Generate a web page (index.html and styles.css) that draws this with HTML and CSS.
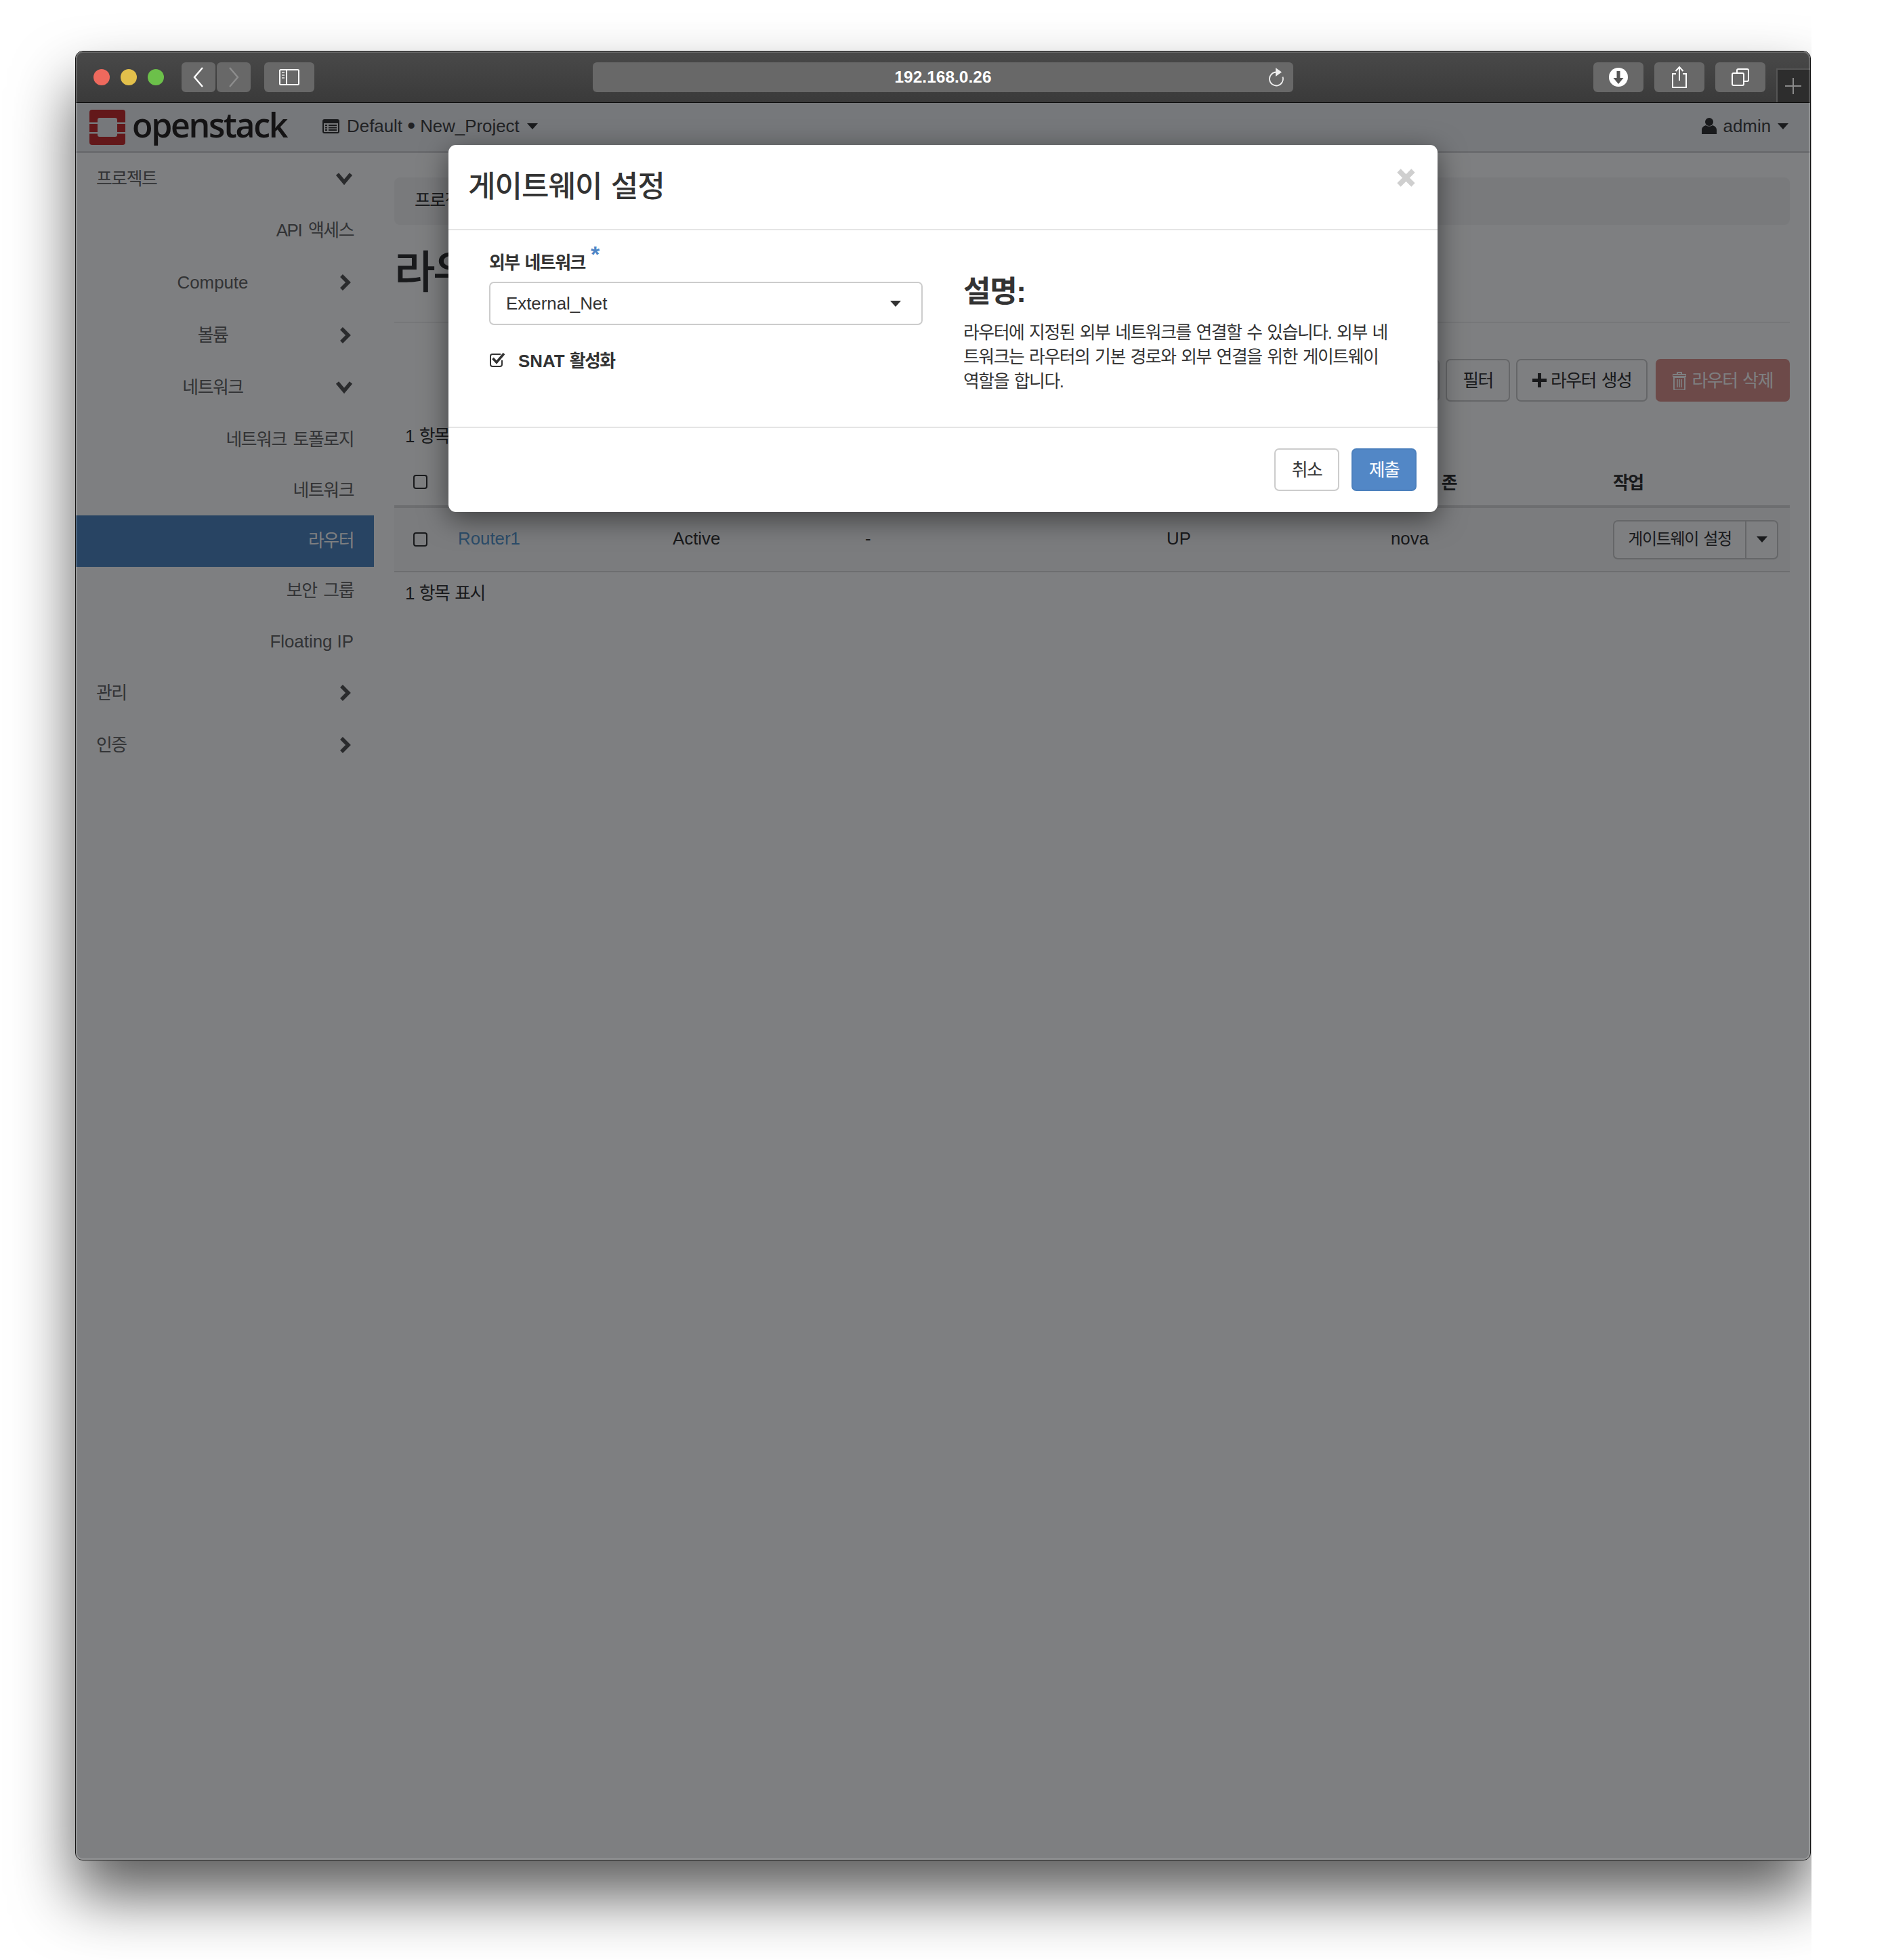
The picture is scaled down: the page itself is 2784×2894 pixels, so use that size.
FILE: index.html
```html
<!DOCTYPE html>
<html lang="ko">
<head>
  <meta charset="UTF-8">
  <title>게이트웨이 설정</title>
  <link rel="stylesheet" href="styles.css">
</head>
<body>

<div class="shot">
<div class="window">
  <!-- browser chrome -->
  <div class="titlebar">
    <div class="lights">
      <span class="light red"></span>
      <span class="light yellow"></span>
      <span class="light green"></span>
    </div>
    <div class="tool back"><svg width="16" height="32" viewBox="0 0 16 32"><polyline points="14,2 2,16 14,30" fill="none" stroke="#fff" stroke-width="2.4"/></svg></div>
    <div class="tool forward"><svg width="16" height="32" viewBox="0 0 16 32"><polyline points="2,2 14,16 2,30" fill="none" stroke="#8d8d8d" stroke-width="2.4"/></svg></div>
    <div class="tool side-toggle">
      <svg width="30" height="24" viewBox="0 0 30 24"><rect x="1" y="1" width="28" height="22" rx="1.5" fill="none" stroke="#fff" stroke-width="2"/><line x1="11" y1="1" x2="11" y2="23" stroke="#fff" stroke-width="2"/><path d="M4 5h4M4 9h4M4 13h4" stroke="#c8c8c8" stroke-width="2"/></svg>
    </div>
    <div class="urlbar">
      <span class="url">192.168.0.26</span>
      <svg class="reload" width="24" height="28" viewBox="0 0 24 28"><path d="M12 6.500a10 10 0 1 0 9.500 7" fill="none" stroke="#eee" stroke-width="1.8"/><path d="M11 0l9 6.500-9 6.500z" fill="#eee"/></svg>
    </div>
    <div class="tool download">
      <svg width="28" height="28" viewBox="0 0 28 28"><circle cx="14" cy="14" r="14" fill="#fff"/><path d="M11.500 5h5v10h5L14 24 6.500 15h5z" fill="#555"/></svg>
    </div>
    <div class="tool share">
      <svg width="24" height="34" viewBox="0 0 24 34"><path d="M7 12H2v20h20V12h-5" fill="none" stroke="#fff" stroke-width="2"/><path d="M12 22V2M6.500 8L12 2l5.500 6" fill="none" stroke="#fff" stroke-width="2"/></svg>
    </div>
    <div class="tool tabs">
      <svg width="26" height="26" viewBox="0 0 26 26"><rect x="1" y="7" width="17" height="18" rx="2" fill="none" stroke="#fff" stroke-width="2"/><path d="M8 7V3a2 2 0 0 1 2-2h13a2 2 0 0 1 2 2v14a2 2 0 0 1-2 2h-5" fill="none" stroke="#fff" stroke-width="2"/></svg>
    </div>
    <div class="new-tab">
      <svg width="24" height="24" viewBox="0 0 24 24"><path d="M12 0v24M0 12h24" stroke="#8a8a8a" stroke-width="2"/></svg>
    </div>
  </div>

  <div class="page">
    <div class="topnav">
      <div class="brand">
        <svg class="brand-mark" width="53" height="52" viewBox="0 0 53 52"><path fill="#c9302f" d="M4 0h45a4 4 0 0 1 4 4v14.500H41V15a3 3 0 0 0-3-3H15a3 3 0 0 0-3 3v3.500H0V4a4 4 0 0 1 4-4zM0 21h12v12H0zM41 21h12v12H41zM0 35.500h12V37a3 3 0 0 0 3 3h23a3 3 0 0 0 3-3v-1.500h12V48a4 4 0 0 1-4 4H4a4 4 0 0 1-4-4z"/></svg>
        <span class="brand-name">openstack</span>
      </div>
      <div class="project">
        <svg width="25" height="21" viewBox="0 0 25 21"><rect width="25" height="21" rx="3" fill="#333"/><rect x="2" y="6" width="21" height="13" fill="#eee"/><path d="M4 9h3M9 9h12M4 12.500h3M9 12.500h12M4 16h3M9 16h12" stroke="#333" stroke-width="2"/></svg>
        <span>Default <span class="dot">•</span> New_Project</span>
        <i class="caret"></i>
      </div>
      <div class="user">
        <svg width="22" height="24" viewBox="0 0 22 24"><circle cx="11" cy="6" r="6" fill="#333"/><path d="M0 24v-6c0-4 3-6 6-7 3 2 7 2 10 0 3 1 6 3 6 7v6z" fill="#333"/></svg>
        <span>admin</span>
        <i class="caret"></i>
      </div>
    </div>

    <div class="layout">
      <div class="sidebar">
        <div class="cat first left"><span class="ko">프로젝트</span><svg class="chev" viewBox="0 0 36 24"><polyline points="8,5 18,17 28,5" /></svg></div>
        <div class="leaf ko">API 액세스</div>
        <div class="cat"><span>Compute</span><svg class="chev" viewBox="0 0 36 24"><polyline points="14,2 24,12 14,22" /></svg></div>
        <div class="cat"><span class="ko">볼륨</span><svg class="chev" viewBox="0 0 36 24"><polyline points="14,2 24,12 14,22" /></svg></div>
        <div class="cat"><span class="ko">네트워크</span><svg class="chev" viewBox="0 0 36 24"><polyline points="8,5 18,17 28,5" /></svg></div>
        <div class="leaf ko">네트워크 토폴로지</div>
        <div class="leaf ko">네트워크</div>
        <div class="leaf active ko">라우터</div>
        <div class="leaf ko">보안 그룹</div>
        <div class="leaf">Floating IP</div>
        <div class="cat left"><span class="ko">관리</span><svg class="chev" viewBox="0 0 36 24"><polyline points="14,2 24,12 14,22" /></svg></div>
        <div class="cat left"><span class="ko">인증</span><svg class="chev" viewBox="0 0 36 24"><polyline points="14,2 24,12 14,22" /></svg></div>
      </div>

      <div class="content">
        <div class="breadcrumb ko">프로젝트 / 네트워크 / 라우터</div>
        <div class="page-header"><h1 class="ko">라우터</h1></div>

        <div class="actions">
          <div class="filter-input"></div>
          <div class="btn ko">필터</div>
          <div class="btn btn-create ko">
            <svg width="21" height="21" viewBox="0 0 21 21"><path d="M8 0h5v8h8v5h-8v8H8v-8H0V8h8z" fill="#333"/></svg>
            라우터 생성
          </div>
          <div class="btn btn-danger ko">
            <svg width="20" height="28" viewBox="0 0 20 28"><path d="M7 5V2h6v3M0 5h20v3H0zM2 9h16v17a2 2 0 0 1-2 2H4a2 2 0 0 1-2-2z" fill="none" stroke="#fff" stroke-width="2"/><path d="M7 12v12M10 12v12M13 12v12" stroke="#fff" stroke-width="1.600"/></svg>
            라우터 삭제
          </div>
        </div>

        <div class="count ko">1 항목 표시</div>

        <div class="grid head">
          <div><span class="check"></span></div>
          <div class="ko">이름</div>
          <div class="ko">상태</div>
          <div class="ko">외부 네트워크</div>
          <div class="ko">관리 상태</div>
          <div class="ko">가용성 존</div>
          <div class="ko">작업</div>
        </div>
        <div class="grid row">
          <div><span class="check"></span></div>
          <div class="link">Router1</div>
          <div>Active</div>
          <div>-</div>
          <div>UP</div>
          <div>nova</div>
          <div>
            <div class="split">
              <span class="split-main ko">게이트웨이 설정</span>
              <span class="split-caret"><i class="caret"></i></span>
            </div>
          </div>
        </div>
        <div class="count bottom ko">1 항목 표시</div>
      </div>
    </div>

    <div class="backdrop"></div>

    <div class="modal">
      <div class="modal-header">
        <h3 class="modal-title ko">게이트웨이 설정</h3>
        <svg class="close" width="27" height="27" viewBox="0 0 27 27"><path d="M3 3l21 21M24 3L3 24" stroke="#cfcfcf" stroke-width="7.500"/></svg>
      </div>
      <div class="modal-body">
        <div class="form-col">
          <div class="field-label"><span class="ko">외부 네트워크</span><sup class="req">*</sup></div>
          <div class="select">External_Net<i class="caret"></i></div>
          <div class="snat">
            <svg width="23" height="24" viewBox="0 0 23 24"><path d="M18 13v6a3 3 0 0 1-3 3H4a3 3 0 0 1-3-3V7a3 3 0 0 1 3-3h12" fill="none" stroke="#333" stroke-width="2"/><path d="M4.500 10l5.500 6L21 3" fill="none" stroke="#333" stroke-width="3.600"/></svg>
            <b>SNAT <span class="ko">활성화</span></b>
          </div>
        </div>
        <div class="help-col">
          <h4 class="ko">설명:</h4>
          <p class="ko">라우터에 지정된 외부 네트워크를 연결할 수 있습니다. 외부 네<br>트워크는 라우터의 기본 경로와 외부 연결을 위한 게이트웨이<br>역할을 합니다.</p>
        </div>
      </div>
      <div class="modal-footer">
        <div class="btn ko">취소</div>
        <div class="btn btn-primary ko">제출</div>
      </div>
    </div>
  </div>
</div>
</div>

</body>
</html>
```

FILE: styles.css
```css
body {
  margin: 0;
  width: 2784px;
  height: 2894px;
  background: #fff;
  font-family: "Liberation Sans", "Noto Sans CJK KR", sans-serif;
  font-size: 25.85px;
  line-height: 36px;
  color: #333;
  overflow: hidden;
}

.ko {
  letter-spacing: -0.055em;
  word-spacing: 2px;
}

/* the capture stops at the window's right edge, so its shadow does too */
.shot {
  width: 2674px;
  height: 2894px;
  overflow: hidden;
}

.window {
  position: relative;
  box-sizing: border-box;
  width: 2562px;
  height: 2672px;
  margin: 0 0 0 111px;
  top: 75px;
  border: 1px solid #111;
  border-radius: 11px;
  overflow: hidden;
  background: #fff;
  box-shadow: 0 52px 90px rgba(0, 0, 0, 0.64);
}

/* thin light edge just inside the window border */
.window::after {
  content: "";
  position: absolute;
  inset: 0;
  border-radius: 10px;
  box-shadow: inset 0 0 0 2px rgba(255, 255, 255, 0.18);
  pointer-events: none;
}

/* browser chrome */
.titlebar {
  box-sizing: border-box;
  display: flex;
  align-items: flex-start;
  height: 76px;
  padding-top: 16px;
  background: linear-gradient(#494949, #3a3a3a);
  border-bottom: 1px solid #0d0d0d;
}

.lights {
  display: flex;
  gap: 16px;
  margin: 10px 0 0 26px;
}

.light {
  width: 24px;
  height: 24px;
  border-radius: 50%;
}

.light.red { background: #ee695d; }
.light.yellow { background: #e3c04b; }
.light.green { background: #6cc04a; }

.tool {
  display: flex;
  align-items: center;
  justify-content: center;
  height: 44px;
  border-radius: 6px;
  background: #686868;
}

.back { width: 50px; margin-left: 26px; }
.forward { width: 50px; margin-left: 2px; }
.side-toggle { width: 74px; margin-left: 20px; }
.download { width: 74px; margin-left: 443px; }
.share { width: 74px; margin-left: 16px; }
.tabs { width: 74px; margin-left: 16px; }

.urlbar {
  position: relative;
  display: flex;
  align-items: center;
  justify-content: center;
  width: 1034px;
  height: 44px;
  margin-left: 411px;
  border-radius: 6px;
  background: #686868;
}

.url {
  color: #fff;
  font-size: 24.500px;
  font-weight: bold;
}

.reload {
  position: absolute;
  right: 13px;
  top: 8px;
}

.new-tab {
  box-sizing: border-box;
  display: flex;
  align-items: center;
  justify-content: center;
  align-self: flex-end;
  width: 50px;
  height: 50px;
  margin-left: 16px;
  padding-right: 2px;
  background: #2d2d2d;
  border-top: 2px solid #555;
  border-left: 2px solid #555;
}

/* page */
.page {
  position: relative;
  height: 2594px;
}

.topnav {
  box-sizing: border-box;
  display: flex;
  align-items: center;
  height: 74px;
  background: #eef0f3;
  border-bottom: 3px solid #d6d6d8;
}

.brand {
  display: flex;
  align-items: center;
  margin-left: 20px;
}

.brand-name {
  margin: -7px 0 0 10px;
  font-family: "Open Sans", sans-serif;
  font-size: 50px;
  font-weight: 600;
  line-height: 52px;
  letter-spacing: -2.300px;
  color: #2a2623;
}

.project {
  display: flex;
  align-items: center;
  gap: 11px;
  margin: -3px 0 0 53px;
  color: #444;
}

.dot {
  font-size: 1.300em;
  line-height: 0;
  vertical-align: -2px;
}

.user {
  display: flex;
  align-items: center;
  gap: 10px;
  margin: -3px 32px 0 auto;
  color: #444;
}

.caret {
  display: inline-block;
  width: 0;
  height: 0;
  border-top: 9px solid #333;
  border-left: 8px solid transparent;
  border-right: 8px solid transparent;
}

.layout {
  display: flex;
}

/* sidebar */
.sidebar {
  flex: none;
  width: 440px;
  color: #666;
}

.cat,
.leaf {
  box-sizing: border-box;
  display: flex;
  align-items: center;
  padding: 0 30px;
}

.cat {
  height: 77.500px;
}

.cat.first {
  height: 75px;
}

.cat span {
  flex: 1;
  text-align: center;
}

.cat.left span {
  text-align: left;
}

.leaf {
  justify-content: flex-end;
  height: 75px;
}

.leaf.ko {
  word-spacing: 4px;
}

.leaf:nth-child(2) {
  height: 77.500px;
}

.leaf.active {
  height: 76px;
  padding-bottom: 2px;
  background: #5288c2;
  color: #fff;
}

.leaf.active + .leaf {
  margin-top: -3px;
}

.chev {
  flex: none;
  width: 36px;
  height: 24px;
  transform: translateX(4px);
  fill: none;
  stroke: #555;
  stroke-width: 5.500px;
}

/* main content */
.content {
  flex: 1;
  padding: 36px 30px 0;
}

.breadcrumb {
  box-sizing: border-box;
  height: 70px;
  padding: 16px 30px;
  border-radius: 8px;
  background: #f5f5f5;
}

.page-header {
  height: 143px;
  border-bottom: 2px solid #eee;
}

.page-header h1 {
  margin: 0;
  padding-top: 33px;
  font-size: 66px;
  font-weight: 500;
  line-height: 74px;
}

.actions {
  display: flex;
  justify-content: flex-end;
  gap: 9px;
  margin-top: 53px;
}

.filter-input {
  box-sizing: border-box;
  width: 400px;
  height: 63px;
  border: 2px solid #ccc;
  border-radius: 7px;
  background: #fff;
}

.btn {
  box-sizing: border-box;
  display: flex;
  align-items: center;
  justify-content: center;
  gap: 8px;
  height: 63px;
  padding: 0 23px;
  border: 2px solid #ccc;
  border-radius: 7px;
  background: #fff;
  white-space: nowrap;
}

.btn-create {
  gap: 6px;
  padding: 0 22px;
  margin-right: 3px;
}

.btn-danger {
  background: #dd948e;
  border-color: #dd948e;
  color: #fff;
}

.btn-primary {
  background: #5287c6;
  border-color: #4c80bd;
  color: #fff;
}

.count {
  margin: 33px 0 0 16px;
}

.count.bottom {
  margin-top: 13px;
}

.grid {
  display: grid;
  grid-template-columns: 79px 317px 284px 445px 331px 328px 276px;
  align-items: center;
}

.grid > div {
  padding-left: 15px;
}

.head {
  box-sizing: border-box;
  height: 88px;
  padding-top: 18px;
  font-weight: bold;
  border-bottom: 4px solid #ddd;
}

.head .check {
  margin-top: -4px;
}

.row {
  height: 93px;
  background: #f9f9f9;
  border-bottom: 2px solid #ddd;
}

/* text cells sit a little above the checkbox and button */
.row > div:nth-child(n+2):nth-child(-n+6) {
  padding-bottom: 4px;
}

.check {
  display: block;
  box-sizing: border-box;
  width: 21px;
  height: 21px;
  margin-left: 13px;
  border: 2px solid #333;
  border-radius: 4px;
}

.link {
  color: #5a9ad0;
}

.split {
  box-sizing: border-box;
  display: flex;
  width: 244px;
  height: 58px;
  border: 2px solid #ccc;
  border-radius: 7px;
  background: #fff;
  font-size: 24px;
}

.split-main {
  display: flex;
  align-items: center;
  justify-content: center;
  width: 193px;
  padding-bottom: 2px;
  border-right: 2px solid #ccc;
}

.split-caret {
  display: flex;
  align-items: center;
  justify-content: center;
  flex: 1;
}

/* modal */
.backdrop {
  position: absolute;
  inset: 0;
  background: rgba(0, 1, 5, 0.505);
}

.modal {
  position: absolute;
  top: 62px;
  left: 550px;
  width: 1460px;
  border-radius: 11px;
  background: #fff;
  box-shadow: 0 10px 40px rgba(0, 0, 0, 0.5);
}

.modal-header {
  box-sizing: border-box;
  display: flex;
  justify-content: space-between;
  height: 126px;
  padding: 0 33px 0 29px;
  border-bottom: 2px solid #e5e5e5;
}

.modal-title {
  margin: 0;
  font-size: 44px;
  font-weight: 500;
  letter-spacing: -0.022em;
  line-height: 124px;
}

.close {
  margin-top: 35px;
}

.modal-body {
  box-sizing: border-box;
  display: flex;
  gap: 60px;
  height: 290px;
  padding: 30px 0 0 60px;
}

.form-col {
  width: 640px;
}

.field-label {
  font-weight: bold;
}

.req {
  margin-left: 8px;
  color: #4f86c6;
  font-size: 34px;
  font-weight: bold;
  line-height: 0;
}

.select {
  box-sizing: border-box;
  display: flex;
  align-items: center;
  justify-content: space-between;
  height: 64px;
  margin-top: 10px;
  padding: 0 30px 0 23px;
  border: 2px solid #ccc;
  border-radius: 7px;
}

.snat {
  display: flex;
  align-items: center;
  gap: 19px;
  margin-top: 35px;
  padding-left: 1px;
}

.snat svg {
  margin-top: -4px;
}

.help-col {
  margin-top: 39px;
  white-space: nowrap;
}

.help-col h4 {
  margin: 0;
  font-size: 44px;
  font-weight: bold;
  letter-spacing: -0.03em;
  line-height: 44px;
}

.help-col p {
  margin: 20px 0 0;
  letter-spacing: -0.056em;
  word-spacing: 2px;
}

.modal-footer {
  display: flex;
  justify-content: flex-end;
  gap: 18px;
  padding: 30px 31px 31px 0;
  border-top: 2px solid #e5e5e5;
}

.modal-footer .btn {
  width: 96px;
  padding: 0;
}
```
